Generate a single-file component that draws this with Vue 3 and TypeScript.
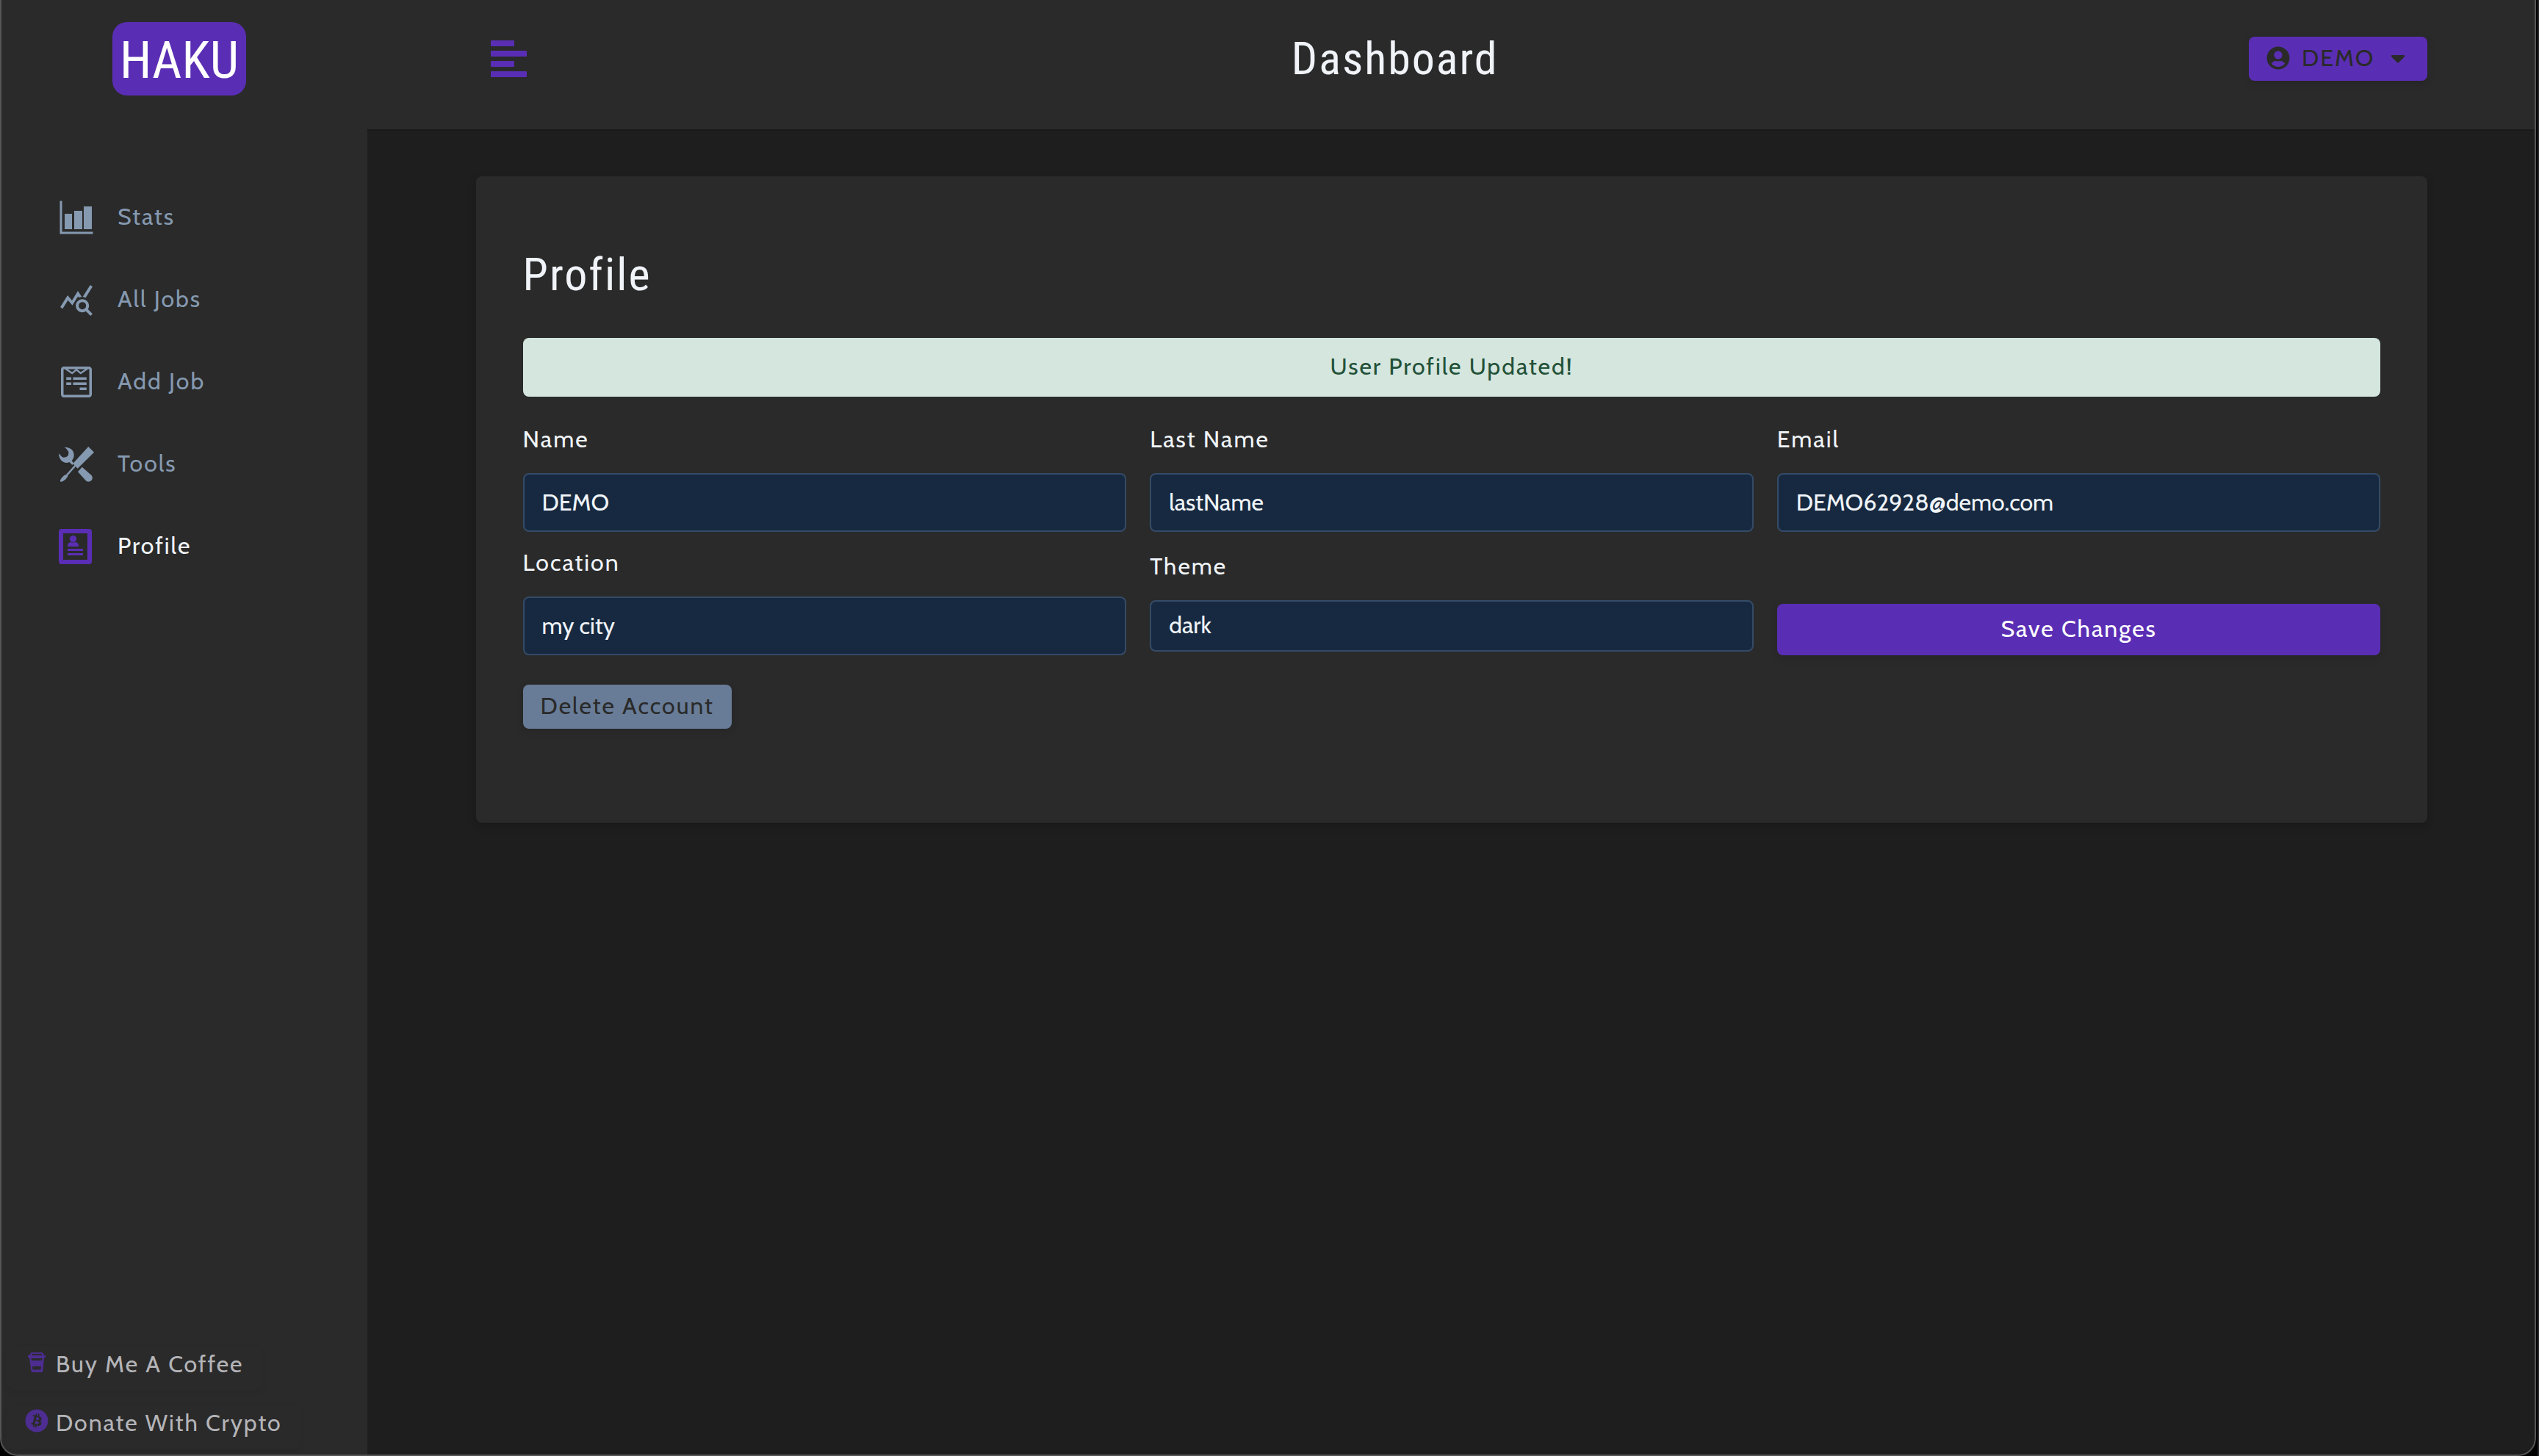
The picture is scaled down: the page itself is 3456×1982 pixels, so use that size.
<script setup lang="ts">
import { reactive } from 'vue'

type IconName = 'stats' | 'jobs' | 'form' | 'tools' | 'profile'

interface NavLink {
  label: string
  icon: IconName
  active?: boolean
}

const links: NavLink[] = [
  { label: 'Stats', icon: 'stats' },
  { label: 'All Jobs', icon: 'jobs' },
  { label: 'Add Job', icon: 'form' },
  { label: 'Tools', icon: 'tools' },
  { label: 'Profile', icon: 'profile', active: true },
]

const user = reactive({
  name: 'DEMO',
  lastName: 'lastName',
  email: 'DEMO62928@demo.com',
  location: 'my city',
  theme: 'dark',
})
</script>

<template>
  <div class="desktop">
    <div class="window">
      <aside class="sidebar">
        <div class="brand"><a href="#" class="logo">HAKU</a></div>
        <nav class="links">
          <a v-for="link in links" :key="link.label" href="#" class="link" :class="{ active: link.active }">
            <svg v-if="link.icon === 'stats'" class="link-icon" viewBox="0 0 48 48">
              <path d="M1.5 1.5h3v42h42v3h-45zM8 19h10v21H8zM21 15h11v25H21zM34 9h11v31H34z" />
            </svg>
            <svg v-else-if="link.icon === 'jobs'" class="link-icon" viewBox="0 0 24 24">
              <path d="M19.88 18.47c.44-.7.7-1.51.7-2.39 0-2.49-2.01-4.5-4.5-4.5s-4.5 2.01-4.5 4.5 2.01 4.5 4.49 4.5c.88 0 1.7-.26 2.39-.7L21.58 23 23 21.58l-3.12-3.11zm-3.8.11a2.5 2.5 0 0 1 0-5 2.5 2.5 0 0 1 0 5zm-.36-8.5c-.74.02-1.45.18-2.1.45l-.55-.83-3.8 6.18-3.01-3.52-3.63 5.81L1 17l5-8 3 3.5L13 6l2.72 4.08zm2.59.5c-.64-.28-1.33-.45-2.05-.49L21.38 2 23 3.18l-4.69 7.4z" />
            </svg>
            <svg v-else-if="link.icon === 'form'" class="link-icon" viewBox="0 0 448 512">
              <path d="M448 75.2v361.7c0 24.3-19 43.2-43.2 43.2H43.2C19.3 480 0 461.4 0 436.8V75.2C0 51.1 18.8 32 43.2 32h361.7c24 0 43.1 18.8 43.1 43.2zm-37.3 361.6V75.2c0-3-2.6-5.8-5.8-5.8h-9.3L285.3 144 224 94.1 162.8 144 52.5 69.3h-9.3c-3.2 0-5.8 2.8-5.8 5.8v361.7c0 3 2.6 5.8 5.8 5.8h361.7c3.2.1 5.8-2.7 5.8-5.8zM150.2 186v37H76.7v-37h73.5zm0 74.4v37.3H76.7v-37.3h73.5zm11.1-147.3l54-43.7H96.8l64.5 43.7zm210 72.9v37h-196v-37h196zm0 74.4v37.3h-196v-37.3h196zm-84.6-147.3l64.5-43.7H232.8l53.9 43.7zM371.3 335v37.3h-99.4V335h99.4z" />
            </svg>
            <svg v-else-if="link.icon === 'tools'" class="link-icon" viewBox="0 0 48 48">
              <path d="M40.3 0L48 7.7L25.7 29.7L23 27L12 39.5L12.3 40.5L9.3 44.5Q6 47.5 2.7 48L1.7 46.6Q3 43.5 5.3 41Q7.5 38.3 10 38L21.3 25.3L19.3 23z" />
              <path d="M7.7 1.3C14 0 20.7 4.5 20.7 11.3C20.7 14 20 16 18.7 17.7L17.7 19L20.3 22.7L18.3 25L14.5 21Q12.5 22 10 22C4.5 21.7 0 16.5 0 9.3L4.7 14.3Q8.5 15.5 12.3 12.7Q13.7 9.5 13.3 7L10.5 3Q9.3 1.9 7.7 1.3z" />
              <path d="M31.7 27.7L44.5 39Q47.2 42.5 44.5 46Q41 49.3 37 46.5L26 34.3z" />
            </svg>
            <svg v-else class="link-icon" viewBox="0 0 48 48">
              <path fill-rule="evenodd" d="M4 0h37a4 4 0 0 1 4 4v40a4 4 0 0 1-4 4H4a4 4 0 0 1-4-4V4a4 4 0 0 1 4-4zM6 6v36h33V6z" />
              <circle cx="19.5" cy="13.5" r="4.6" />
              <path d="M12 24v-2q1-4 5-4 2.5 1 5 0 4 0 5 4v2zM12 27h21v3H12zM12 33h21v3H12z" />
            </svg>
            <span class="link-text">{{ link.label }}</span>
          </a>
        </nav>
        <div class="support">
          <button type="button" class="btn support-btn">
            <svg class="btn-icon" viewBox="0 0 32 32">
              <path fill-rule="evenodd" d="M9.5 3h13.5q1 0 1.4 1l1.6 3h2v3h-2l-1.6 18q-.2 2-2 2H10.400q-1.800 0-2-2L6 10H4V7h2l1.800-3q.5-1 1.700-1zM10 5L8.800 7h14.800L22.300 5zM8.500 11l.4 3h14.300l.4-3zM10 22l.5 4.500h11L22 22z" />
            </svg>
            <span>Buy Me A Coffee</span>
          </button>
          <button type="button" class="btn support-btn">
            <svg class="btn-icon" viewBox="0 0 512 512">
              <path d="M504 256c0 136.967-111.033 248-248 248S8 392.967 8 256 119.033 8 256 8s248 111.033 248 248zm-141.651-35.33c4.937-32.999-20.191-50.739-54.55-62.573l11.146-44.702-27.213-6.781-10.851 43.524c-7.154-1.783-14.502-3.464-21.803-5.13l10.929-43.81-27.198-6.781-11.153 44.686c-5.922-1.349-11.735-2.682-17.377-4.084l.031-.14-37.53-9.37-7.239 29.062s20.191 4.627 19.765 4.913c11.022 2.751 13.014 10.044 12.68 15.825l-12.696 50.925c.76.194 1.744.473 2.829.907-.907-.225-1.876-.473-2.876-.713l-17.796 71.338c-1.349 3.348-4.767 8.37-12.471 6.464.271.395-19.78-4.937-19.78-4.937l-13.51 31.147 35.414 8.827c6.588 1.651 13.045 3.379 19.4 5.006l-11.262 45.213 27.182 6.781 11.153-44.733a1038.209 1038.209 0 0 0 21.687 5.627l-11.115 44.523 27.213 6.781 11.262-45.128c46.404 8.781 81.299 5.239 95.986-36.727 11.834-33.79-.589-53.281-25.004-65.991 17.78-4.098 31.174-15.792 34.747-39.949zm-62.177 87.179c-8.41 33.79-65.308 15.523-83.755 10.943l14.944-59.899c18.446 4.603 77.6 13.717 68.811 48.956zm8.417-87.667c-7.673 30.736-55.031 15.12-70.393 11.292l13.548-54.327c15.363 3.828 64.836 10.973 56.845 43.035z" />
            </svg>
            <span>Donate With Crypto</span>
          </button>
        </div>
      </aside>

      <div class="content">
        <header class="topbar">
          <div class="topbar-inner">
            <button type="button" class="toggle" aria-label="Toggle sidebar">
              <svg viewBox="0 0 49 56">
                <rect y="3" width="32" height="8" rx="1" />
                <rect y="17" width="49" height="8" rx="1" />
                <rect y="31" width="32" height="8" rx="1" />
                <rect y="45" width="49" height="8" rx="1" />
              </svg>
            </button>
            <h1 class="heading">Dashboard</h1>
            <button type="button" class="btn user-btn">
              <svg class="btn-icon" viewBox="0 0 496 512">
                <path d="M248 8C111 8 0 119 0 256s111 248 248 248 248-111 248-248S385 8 248 8zm0 96c48.6 0 88 39.4 88 88s-39.4 88-88 88-88-39.4-88-88 39.4-88 88-88zm0 344c-58.7 0-111.3-26.6-146.5-68.2 18.8-35.4 55.6-59.8 98.5-59.8 2.4 0 4.8.4 7.1 1.1 13 4.2 26.6 6.9 40.9 6.9 14.3 0 28-2.7 40.9-6.9 2.3-.7 4.7-1.1 7.1-1.1 42.9 0 79.7 24.4 98.5 59.8C359.3 421.4 306.7 448 248 448z" />
              </svg>
              <span>{{ user.name }}</span>
              <svg class="btn-icon" viewBox="-96 0 512 512">
                <path d="M31.3 192h257.3c17.8 0 26.7 21.5 14.1 34.1L174.1 354.8c-7.8 7.8-20.5 7.8-28.3 0L17.2 226.1C4.6 213.5 13.5 192 31.3 192z" />
              </svg>
            </button>
          </div>
        </header>

        <main class="page">
          <section class="card">
            <form @submit.prevent>
              <h2 class="heading card-title">Profile</h2>
              <div class="alert" role="status">User Profile Updated!</div>
              <div class="fields">
                <div class="field">
                  <label for="name">Name</label>
                  <input id="name" v-model="user.name" type="text" />
                </div>
                <div class="field">
                  <label for="lastName">Last Name</label>
                  <input id="lastName" v-model="user.lastName" type="text" />
                </div>
                <div class="field">
                  <label for="email">Email</label>
                  <input id="email" v-model="user.email" type="email" />
                </div>
                <div class="field">
                  <label for="location">Location</label>
                  <input id="location" v-model="user.location" type="text" />
                </div>
                <div class="field">
                  <label for="theme">Theme</label>
                  <select id="theme" v-model="user.theme">
                    <option value="dark">dark</option>
                    <option value="light">light</option>
                  </select>
                </div>
                <button type="submit" class="btn save-btn">Save Changes</button>
              </div>
            </form>
            <button type="button" class="btn delete-btn">Delete Account</button>
          </section>
        </main>
      </div>
    </div>
  </div>
</template>

<style>
body {
  margin: 0;
  background: #000;
}
</style>

<style scoped>
.desktop {
  --surface: #2a2a2a;
  --purple: #5a2eb4;
  --text: #f0f4f8;
  --muted: #8599b0;
  box-sizing: border-box;
  min-height: 100vh;
  padding-right: 2px;
  border-right: 2px solid #24242a;
  display: flex;
  color: var(--text);
  font: 400 32px/44px Cabin, Lato, sans-serif;
  letter-spacing: 2px;
}

.desktop * {
  box-sizing: border-box;
}

.window {
  position: relative;
  flex: 1;
  display: flex;
  overflow: hidden;
  border-radius: 0 0 24px 24px;
  background: #1e1e1e;
}

/* hairline edge drawn over the window's contents */
.window::after {
  content: '';
  position: absolute;
  inset: 0;
  border: 2px solid #555;
  border-top: 0;
  border-radius: 0 0 24px 24px;
  pointer-events: none;
}

button,
input,
select {
  margin: 0;
  font: inherit;
  color: inherit;
}

svg {
  display: block;
  fill: currentColor;
}

.sidebar {
  width: 500px;
  flex: none;
  display: flex;
  flex-direction: column;
  background: var(--surface);
}

.brand {
  height: 160px;
  padding-right: 12px;
  display: flex;
  align-items: center;
  justify-content: center;
}

.logo {
  width: 182px;
  height: 100px;
  padding-top: 4px;
  border-radius: 20px;
  display: flex;
  align-items: center;
  justify-content: center;
  background: var(--purple);
  color: #fff;
  font: 400 70px/84px 'Roboto Condensed', 'Liberation Sans Narrow', sans-serif;
  letter-spacing: 0;
  text-decoration: none;
}

.links {
  margin-top: 80px;
  display: flex;
  flex-direction: column;
}

.link {
  height: 112px;
  padding-left: 80px;
  display: flex;
  align-items: center;
  gap: 32px;
  color: var(--muted);
  text-decoration: none;
}

.link-icon {
  width: 48px;
  height: 48px;
}

.link-text {
  padding-bottom: 2px;
}

.link.active {
  color: var(--text);
}

.link.active .link-icon {
  color: var(--purple);
}

.support {
  margin-top: auto;
  padding: 10px;
  display: flex;
  flex-direction: column;
  align-items: flex-start;
  gap: 20px;
}

.btn {
  height: 60px;
  padding: 0 24px 2px;
  border: 0;
  border-radius: 8px;
  display: flex;
  align-items: center;
  justify-content: center;
  letter-spacing: 2px;
  color: var(--surface);
  box-shadow: 0 4px 12px rgba(0, 0, 0, 0.12);
}

.btn-icon {
  width: 32px;
  height: 32px;
}

.support-btn {
  padding-bottom: 10px;
  gap: 10px;
  background: transparent;
  color: #b4b4b8;
  box-shadow: 0 4px 8px rgba(0, 0, 0, 0.06);
}

.support-btn .btn-icon {
  margin-bottom: 6px;
  color: #4d2d91;
}

.content {
  flex: 1;
  min-width: 0;
}

.topbar {
  height: 176px;
  padding-bottom: 16px;
  display: flex;
  justify-content: center;
  background: var(--surface);
  box-shadow: 0 2px 0 rgba(0, 0, 0, 0.15);
}

.topbar-inner {
  width: 90%;
  display: flex;
  align-items: center;
  justify-content: space-between;
}

.toggle {
  padding: 0 20px;
  border: 0;
  background: transparent;
  color: var(--purple);
}

.toggle svg {
  width: 49px;
  height: 56px;
}

.heading {
  margin: 0;
  font: 400 62px/84px 'Roboto Condensed', 'Liberation Sans Narrow', sans-serif;
  letter-spacing: 2px;
}

.user-btn {
  gap: 16px;
  background: var(--purple);
}

.page {
  padding: 64px 0;
  display: flex;
  justify-content: center;
}

.card {
  width: 90%;
  padding: 64px 64px 128px;
  border-radius: 8px;
  background: var(--surface);
  box-shadow: 0 4px 12px rgba(0, 0, 0, 0.2);
}

.card-title {
  margin: 28px 0 44px;
}

.alert {
  height: 80px;
  margin-bottom: 36px;
  padding-bottom: 2px;
  border-radius: 8px;
  display: flex;
  align-items: center;
  justify-content: center;
  background: #d5e6de;
  color: #225138;
}

.fields {
  display: grid;
  grid-template-columns: repeat(3, 1fr);
  column-gap: 32px;
  row-gap: 20px;
  align-items: center;
}

.field {
  display: flex;
  flex-direction: column;
}

.field label {
  margin-bottom: 24px;
}

.field input,
.field select {
  width: 100%;
  height: 80px;
  padding: 0 24px 2px;
  border: 2px solid #344b67;
  border-radius: 8px;
  outline: 0;
  appearance: none;
  background: #172940;
  letter-spacing: 0;
}

.field select {
  height: 70px;
}

.save-btn {
  height: 70px;
  align-self: end;
  background: var(--purple);
  color: #fff;
}

.delete-btn {
  margin-top: 40px;
  background: #687c97;
}
</style>
